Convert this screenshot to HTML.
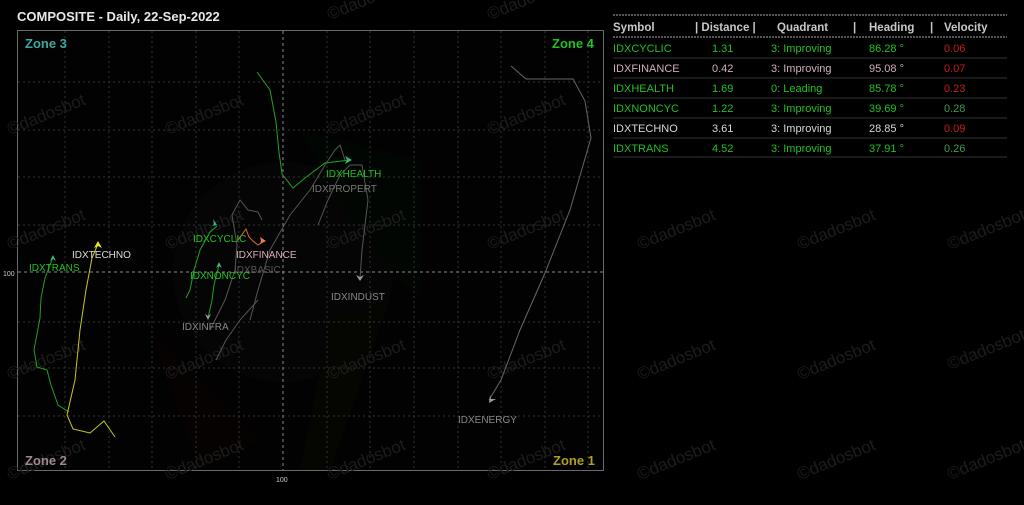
<!DOCTYPE html>
<html><head><meta charset="utf-8"><style>
body{margin:0;background:#000;width:1024px;height:505px;overflow:hidden;font-family:"Liberation Sans",sans-serif;position:relative}
</style></head><body>
<svg width="1024" height="505" style="position:absolute;left:0;top:0" font-family="Liberation Sans, sans-serif">
<text x="17" y="21" fill="#e8e8e8" font-size="13" font-weight="bold">COMPOSITE - Daily, 22-Sep-2022</text>
<rect x="17.5" y="30.5" width="586" height="440" fill="#020202" stroke="#6a6a6a" stroke-width="1"/>
<g opacity="0.3">
<circle cx="283" cy="272" r="110" fill="#0c0c0e"/>
<path d="M150 330 L200 470 L260 440 Z" fill="#140404"/>
<path d="M330 320 L390 300 L330 470 L300 470 Z" fill="#0e0e03"/>
<path d="M300 130 L420 160 L420 300 L350 220 Z" fill="#041004"/>
</g>
<g stroke="#333" stroke-dasharray="2,3" stroke-width="1">
<line x1="65" y1="31" x2="65" y2="470"/><line x1="109" y1="31" x2="109" y2="470"/><line x1="152" y1="31" x2="152" y2="470"/><line x1="196" y1="31" x2="196" y2="470"/><line x1="239" y1="31" x2="239" y2="470"/>
<line x1="327" y1="31" x2="327" y2="470"/><line x1="370" y1="31" x2="370" y2="470"/><line x1="414" y1="31" x2="414" y2="470"/><line x1="458" y1="31" x2="458" y2="470"/><line x1="501" y1="31" x2="501" y2="470"/><line x1="545" y1="31" x2="545" y2="470"/><line x1="588" y1="31" x2="588" y2="470"/>
<line x1="18" y1="82" x2="603" y2="82"/><line x1="18" y1="130" x2="603" y2="130"/><line x1="18" y1="177" x2="603" y2="177"/><line x1="18" y1="225" x2="603" y2="225"/><line x1="18" y1="322" x2="603" y2="322"/><line x1="18" y1="368" x2="603" y2="368"/><line x1="18" y1="416" x2="603" y2="416"/>
</g>
<g stroke="#888" stroke-dasharray="3,3"><line x1="283" y1="31" x2="283" y2="470"/><line x1="18" y1="272" x2="603" y2="272"/></g>
<g font-size="17" fill="#1c1c1c">
<text x="10" y="135" transform="rotate(-22 10 135)">©dadosbot</text><text x="168" y="135" transform="rotate(-22 168 135)">©dadosbot</text><text x="330" y="135" transform="rotate(-22 330 135)">©dadosbot</text><text x="490" y="135" transform="rotate(-22 490 135)">©dadosbot</text>
<text x="10" y="250" transform="rotate(-22 10 250)">©dadosbot</text><text x="168" y="250" transform="rotate(-22 168 250)">©dadosbot</text><text x="330" y="250" transform="rotate(-22 330 250)">©dadosbot</text><text x="490" y="250" transform="rotate(-22 490 250)">©dadosbot</text>
<text x="10" y="380" transform="rotate(-22 10 380)">©dadosbot</text><text x="168" y="380" transform="rotate(-22 168 380)">©dadosbot</text><text x="330" y="380" transform="rotate(-22 330 380)">©dadosbot</text><text x="490" y="380" transform="rotate(-22 490 380)">©dadosbot</text>
<text x="10" y="480" transform="rotate(-22 10 480)">©dadosbot</text><text x="168" y="480" transform="rotate(-22 168 480)">©dadosbot</text><text x="330" y="480" transform="rotate(-22 330 480)">©dadosbot</text><text x="490" y="480" transform="rotate(-22 490 480)">©dadosbot</text>
<text x="640" y="250" transform="rotate(-22 640 250)">©dadosbot</text><text x="800" y="250" transform="rotate(-22 800 250)">©dadosbot</text><text x="950" y="250" transform="rotate(-22 950 250)">©dadosbot</text>
<text x="640" y="380" transform="rotate(-22 640 380)">©dadosbot</text><text x="800" y="380" transform="rotate(-22 800 380)">©dadosbot</text><text x="950" y="370" transform="rotate(-22 950 370)">©dadosbot</text>
<text x="640" y="480" transform="rotate(-22 640 480)">©dadosbot</text><text x="800" y="480" transform="rotate(-22 800 480)">©dadosbot</text><text x="950" y="480" transform="rotate(-22 950 480)">©dadosbot</text>
<text x="330" y="20" transform="rotate(-22 330 20)">©dadosbot</text><text x="490" y="20" transform="rotate(-22 490 20)">©dadosbot</text>
</g>
<text x="25" y="48" fill="#3aa9a0" font-size="13" font-weight="bold">Zone 3</text>
<text x="552" y="48" fill="#22c022" font-size="13" font-weight="bold">Zone 4</text>
<text x="25" y="465" fill="#a08890" font-size="13" font-weight="bold">Zone 2</text>
<text x="553" y="465" fill="#b0a020" font-size="13" font-weight="bold">Zone 1</text>
<text x="3" y="276" fill="#ccc" font-size="7">100</text>
<text x="276" y="482" fill="#ccc" font-size="7">100</text>
<g fill="none" stroke-width="1">
<polyline stroke="#666" points="511,66 526,79 573,79 585,101 591,138 570,210 545,273 520,330 501,380 489,400"/>
<polyline stroke="#555" points="250,320 258,290 270,250 290,215 310,190 325,165 335,150 340,145 345,160"/>
<polyline stroke="#555" points="318,225 328,200 340,175 350,165 362,165 368,200 362,250 360,278"/>
<polyline stroke="#555" points="216,360 226,340 240,320 258,300"/>
<polyline stroke="#555" points="210,330 225,300 235,270 237,245 232,215 240,200 248,210 258,212 262,220"/>
<polyline stroke="#22a022" points="257,72 270,90 276,122 279,152 282,174 293,188 305,178 325,163 350,160"/>
<polyline stroke="#22a022" points="186,298 190,290 194,270 200,250 210,232 217,226"/>
<polyline stroke="#22a022" points="208,318 212,300 214,285 219,265"/>
<polyline stroke="#22a022" points="69,412 58,405 51,385 47,370 37,367 34,350 40,318 41,298 45,278 53,257"/>
<polyline stroke="#c8c820" points="115,437 104,421 90,433 73,429 67,415 75,380 80,330 86,290 92,258 98,244"/>
<polyline stroke="#e06a30" points="238,240 246,229 249,237 253,241 258,245 264,241"/>
</g>
<g>
<path d="M352 160 l-7 -4 l2 4 l-2 4z" fill="#3cb878"/>
<path d="M217 225 l-5 1 l2 -2 l-1 -5z" fill="#3cb878"/>
<path d="M219 262 l-3 6 l3 -2 l3 2z" fill="#3cb878"/>
<path d="M53 255 l-3 6 l3 -2 l3 2z" fill="#3cb878"/>
<path d="M98 241 l-4 7 l4 -2 l4 2z" fill="#e8e820"/>
<path d="M489 403 l1 -8 l1 4 l5 0z" fill="#999"/>
<path d="M360 281 l-4 -6 l4 2 l4 -2z" fill="#999"/>
<path d="M208 320 l-3 -6 l3 2 l3 -2z" fill="#999"/>
<path d="M266 241 l-6 -4 l1 4 l-1 3z" fill="#f08040"/>
</g>
<g font-size="10">
<text x="326" y="177" fill="#22c022">IDXHEALTH</text>
<text x="312" y="192" fill="#777">IDXPROPERT</text>
<text x="193" y="242" fill="#22c022">IDXCYCLIC</text>
<text x="236" y="258" fill="#d8b0b8">IDXFINANCE</text>
<text x="234" y="273" fill="#555">IDXBASIC</text>
<text x="190" y="279" fill="#22c022">IDXNONCYC</text>
<text x="72" y="258" fill="#ddd">IDXTECHNO</text>
<text x="29" y="271" fill="#22c022">IDXTRANS</text>
<text x="331" y="300" fill="#888">IDXINDUST</text>
<text x="182" y="330" fill="#888">IDXINFRA</text>
<text x="458" y="423" fill="#888">IDXENERGY</text>
</g>
<g stroke="#aaa" stroke-dasharray="2,1"><line x1="613" y1="15" x2="1007" y2="15"/><line x1="613" y1="37" x2="1007" y2="37"/></g>
<g stroke="#333"><line x1="613" y1="58" x2="1007" y2="58"/><line x1="613" y1="78" x2="1007" y2="78"/><line x1="613" y1="98" x2="1007" y2="98"/><line x1="613" y1="118" x2="1007" y2="118"/><line x1="613" y1="138" x2="1007" y2="138"/><line x1="613" y1="157" x2="1007" y2="157"/></g>
<g font-size="11.5" font-weight="bold" fill="#c8c8c8">
<text x="613" y="31">Symbol</text><text x="695" y="31">| Distance |</text><text x="777" y="31">Quadrant</text><text x="853" y="31">|</text><text x="869" y="31">Heading</text><text x="930" y="31">|</text><text x="944" y="31">Velocity</text>
</g>
<g font-size="11">
<g fill="#22c022"><text x="613" y="52">IDXCYCLIC</text><text x="712" y="52">1.31</text><text x="771" y="52">3: Improving</text><text x="869" y="52">86.28 °</text></g><text x="944" y="52" fill="#c81c1c">0.06</text>
<g fill="#d0b0b8"><text x="613" y="72">IDXFINANCE</text><text x="712" y="72">0.42</text><text x="771" y="72">3: Improving</text><text x="869" y="72">95.08 °</text></g><text x="944" y="72" fill="#c81c1c">0.07</text>
<g fill="#22c022"><text x="613" y="92">IDXHEALTH</text><text x="712" y="92">1.69</text><text x="771" y="92">0: Leading</text><text x="869" y="92">85.78 °</text></g><text x="944" y="92" fill="#c81c1c">0.23</text>
<g fill="#22c022"><text x="613" y="112">IDXNONCYC</text><text x="712" y="112">1.22</text><text x="771" y="112">3: Improving</text><text x="869" y="112">39.69 °</text></g><text x="944" y="112" fill="#3a9a55">0.28</text>
<g fill="#d8d8d8"><text x="613" y="132">IDXTECHNO</text><text x="712" y="132">3.61</text><text x="771" y="132">3: Improving</text><text x="869" y="132">28.85 °</text></g><text x="944" y="132" fill="#c81c1c">0.09</text>
<g fill="#22c022"><text x="613" y="152">IDXTRANS</text><text x="712" y="152">4.52</text><text x="771" y="152">3: Improving</text><text x="869" y="152">37.91 °</text></g><text x="944" y="152" fill="#3a9a55">0.26</text>
</g>
</svg>
</body></html>
